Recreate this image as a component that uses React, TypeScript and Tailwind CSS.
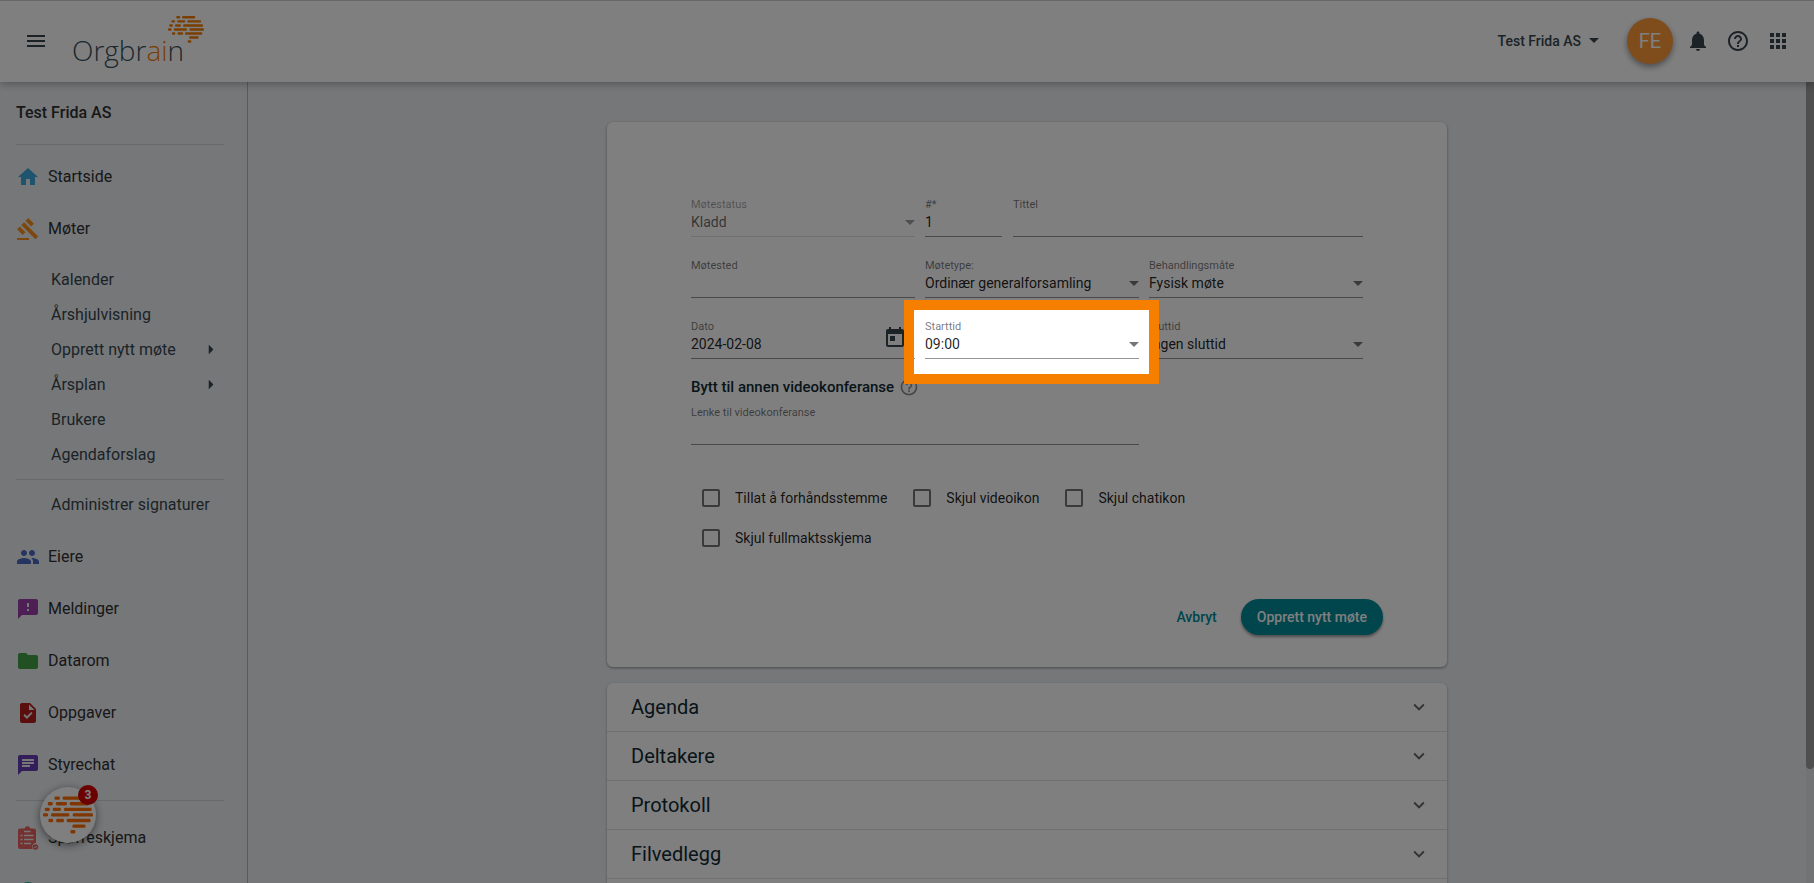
import { useState } from "react";
import type { ReactNode } from "react";
import {
  MdApps,
  MdChat,
  MdFeedback,
  MdFolder,
  MdGavel,
  MdGroup,
  MdHelpOutline,
  MdHome,
  MdKeyboardArrowDown,
  MdMenu,
  MdNotifications,
  MdTask,
  MdToday,
} from "react-icons/md";

// [x, row, width] of every dash in the brain logo
const dashes = [
  [34, 0, 16], [58, 0, 54],
  [14, 1, 15], [38, 1, 33], [79, 1, 57],
  [5, 2, 15], [29, 2, 24], [62, 2, 82],
  [0, 3, 15], [24, 3, 54], [88, 3, 60],
  [16, 4, 14], [39, 4, 23], [70, 4, 71],
  [87, 5, 39],
  [81, 6, 15],
];

const Brain = ({ className }: { className: string }) => (
  <svg viewBox="0 0 148 110" className={className} fill="currentColor" aria-hidden="true">
    {dashes.map(([x, row, width]) => (
      <rect key={`${x}-${row}`} x={x} y={row * 16.6} width={width} height={10} rx={4} />
    ))}
  </svg>
);

const Caret = ({ className }: { className: string }) => (
  <svg viewBox="0 0 10 5" className={className} fill="currentColor" aria-hidden="true">
    <path d="M0 0h10L5 5z" />
  </svg>
);

const SurveyIcon = () => (
  <svg viewBox="0 0 24 24" className="size-6" aria-hidden="true">
    <path
      fill="#e8625f"
      d="M4 2.5h4.6a3 3 0 0 1 5.8 0H18a2 2 0 0 1 2 2V17a4 4 0 0 0-3.4 6H4a2 2 0 0 1-2-2V4.500a2 2 0 0 1 2-2z"
    />
    <path
      stroke="#edeff3"
      strokeWidth="1.6"
      d="M4.500 9.500h2M8 9.500h9.500M4.500 13.500h2M8 13.500h9.500M4.500 17.500h2M8 17.500h7M8 5.500h6.500"
    />
    <circle cx="19.500" cy="21" r="2.800" fill="#e8625f" />
    <path d="m18.200 21 1 1 1.700-2" fill="none" stroke="#edeff3" strokeWidth=".8" />
  </svg>
);

const NavItem = ({ icon, label }: { icon: ReactNode; label: string }) => (
  <a href="#" className="flex h-[52px] items-center gap-2 text-[#303030]">
    {icon}
    {label}
  </a>
);

const SubItem = ({ label, more }: { label: string; more?: boolean }) => (
  <a href="#" className="flex h-[35px] items-center justify-between pr-2 pl-[35px] text-[#37474f]">
    {label}
    {more && <Caret className="h-[5px] w-[10px] -rotate-90" />}
  </a>
);

const Field = ({
  id,
  label,
  value,
  options,
  disabled,
  className = "",
  children,
}: {
  id: string;
  label: string;
  value?: string;
  options?: boolean;
  disabled?: boolean;
  className?: string;
  children?: ReactNode;
}) => (
  <div
    className={`relative flex flex-col border-b ${
      disabled ? "border-black/12 text-black/60" : "border-black/42 text-black/87"
    } ${className}`}
  >
    <label
      htmlFor={id}
      className={`text-[11px] leading-[14px] ${disabled ? "text-black/38" : "text-black/54"}`}
    >
      {label}
    </label>
    <div className="flex items-center pb-1">
      {options ? (
        <>
          <select id={id} disabled={disabled} className="h-5 w-full appearance-none text-sm opacity-100 outline-none">
            <option>{value}</option>
          </select>
          <Caret className={`h-[5px] w-[10px] shrink-0 ${disabled ? "text-black/38" : "text-black/54"}`} />
        </>
      ) : (
        <input id={id} type="text" defaultValue={value} className="h-5 w-full text-sm outline-none" />
      )}
    </div>
    {children}
  </div>
);

const Check = ({ label }: { label: string }) => (
  <label className="flex h-10 items-center gap-[15px] text-sm text-black/87">
    <input
      type="checkbox"
      className="size-[18px] appearance-none rounded-xs border-2 border-black/54 checked:bg-[#008c99]"
    />
    {label}
  </label>
);

const Header = () => (
  <header className="relative z-10 flex h-[82px] shrink-0 items-center justify-between border-t border-[#cfcfcf] bg-white px-6 pb-[2px] shadow-[0_2px_8px_rgba(0,0,0,0.3)]">
    <div className="flex items-center gap-6">
      <button aria-label="Meny" className="text-[#37474f]">
        <MdMenu className="size-6" />
      </button>
      <a href="#" className="flex items-start">
        <span className="pt-[18px] font-['Open_Sans',sans-serif] text-[28px] leading-8 font-light text-[#37505c]">
          Orgbr<span className="text-[#f57c00]">ai</span>n
        </span>
        <Brain className="-ml-4 h-[27px] w-9 text-[#f57c00]" />
      </a>
    </div>
    <div className="flex items-center gap-4 text-[#37474f]">
      <button className="mr-3 flex items-center gap-2 text-sm font-medium">
        Test Frida AS
        <Caret className="h-[5px] w-[10px]" />
      </button>
      <button className="-mr-[3px] size-[46px] rounded-full bg-[#ff9838] text-xl text-white shadow-[0_3px_6px_rgba(0,0,0,0.4)]">
        FE
      </button>
      <button aria-label="Varsler">
        <MdNotifications className="size-6" />
      </button>
      <button aria-label="Hjelp">
        <MdHelpOutline className="size-6" />
      </button>
      <button aria-label="Apper">
        <MdApps className="size-6" />
      </button>
    </div>
  </header>
);

const Sidebar = () => (
  <aside className="w-[248px] shrink-0 border-r border-[#b0b8bd] pr-[23px] pl-4 text-base">
    <p className="pt-[19px] pb-[19px] font-medium text-[#303030]">Test Frida AS</p>
    <nav>
      <hr className="mb-[6px] border-[#cfd3d6]" />
      <NavItem label="Startside" icon={<MdHome className="size-6 text-[#3fa9dc]" />} />
      <NavItem label="Møter" icon={<MdGavel className="size-6 text-[#f9901e]" />} />
      <div className="py-[7px]">
        <SubItem label="Kalender" />
        <SubItem label="Årshjulvisning" />
        <SubItem label="Opprett nytt møte" more />
        <SubItem label="Årsplan" more />
        <SubItem label="Brukere" />
        <SubItem label="Agendaforslag" />
      </div>
      <hr className="border-[#cfd3d6]" />
      <div className="pt-[7px] pb-[9px]">
        <SubItem label="Administrer signaturer" />
      </div>
      <NavItem label="Eiere" icon={<MdGroup className="size-6 text-[#4a68c0]" />} />
      <NavItem label="Meldinger" icon={<MdFeedback className="size-6 text-[#9c3fa8]" />} />
      <NavItem label="Datarom" icon={<MdFolder className="size-6 text-[#43a047]" />} />
      <NavItem label="Oppgaver" icon={<MdTask className="size-6 text-[#b71c1c]" />} />
      <NavItem label="Styrechat" icon={<MdChat className="size-6 text-[#673ab7]" />} />
      <hr className="mt-[9px] mb-[11px] border-[#cfd3d6]" />
      <NavItem label="Spørreskjema" icon={<SurveyIcon />} />
      <div className="pt-4">
        <MdHelpOutline className="size-6 text-[#26a69a]" />
      </div>
    </nav>
  </aside>
);

const sections = ["Agenda", "Deltakere", "Protokoll", "Filvedlegg", ""];

const MeetingForm = () => (
  <form className="rounded-md bg-white pt-[76px] pb-8 shadow-[0_1px_3px_rgba(0,0,0,0.4)]">
    <div className="px-[84px]">
      <div className="grid grid-cols-3 gap-y-[22px]">
        <Field id="status" label="Møtestatus" value="Kladd" options disabled />
        <div className="col-span-2 flex gap-[11px] pl-[10px]">
          <Field id="number" label="#*" value="1" className="w-[77px]" />
          <Field id="title" label="Tittel" className="flex-1" />
        </div>
        <Field id="place" label="Møtested" />
        <Field id="type" label="Møtetype:" value="Ordinær generalforsamling" options className="ml-[10px]" />
        <Field id="mode" label="Behandlingsmåte" value="Fysisk møte" options className="ml-[10px]" />
        <Field id="date" label="Dato" value="2024-02-08">
          <button type="button" aria-label="Velg dato" className="absolute right-2 bottom-2 text-[#37474f]">
            <MdToday className="size-6" />
          </button>
        </Field>
        <Field id="start" label="Starttid" value="09:00" options className="ml-[10px]">
          {/* tour highlight, its shadow dims the rest of the page */}
          <div className="pointer-events-none absolute -top-5 -right-5 -bottom-[26px] -left-[21px] z-50 border-[10px] border-[#f77f00] shadow-[0_0_0_3000px_rgba(0,0,0,0.5)]" />
        </Field>
        <Field id="end" label="Sluttid" value="Ingen sluttid" options className="ml-[10px]" />
      </div>
      <div className="flex items-center gap-[5px] pt-[18px] pb-[9px]">
        <h2 className="text-[15px] leading-5 font-medium text-[#102a35]">Bytt til annen videokonferanse</h2>
        <MdHelpOutline className="size-5 text-[#8a8f92]" />
      </div>
      <Field id="link" label="Lenke til videokonferanse" className="w-2/3" />
    </div>
    <div className="mt-[33px] flex flex-wrap gap-x-[26px] px-[95px]">
      <Check label="Tillat å forhåndsstemme" />
      <Check label="Skjul videoikon" />
      <Check label="Skjul chatikon" />
      <Check label="Skjul fullmaktsskjema" />
    </div>
    <div className="mt-[41px] flex justify-end gap-2 pr-16 text-sm font-medium">
      <button type="button" className="h-9 rounded-full px-4 text-[#008c99]">
        Avbryt
      </button>
      <button
        type="submit"
        className="h-9 rounded-full bg-[#008c99] px-4 text-white shadow-[0_2px_3px_rgba(0,0,0,0.4)]"
      >
        Opprett nytt møte
      </button>
    </div>
  </form>
);

export default function App() {
  const [open, setOpen] = useState("");

  return (
    <div className="relative flex h-screen flex-col overflow-hidden bg-[#edeff3] font-[Roboto,sans-serif]">
      <Header />
      <div className="flex min-h-0 flex-1">
        <Sidebar />
        <main className="min-w-0 flex-1 pt-10">
          <div className="mx-auto max-w-[840px]">
            <MeetingForm />
            <div className="mt-4 rounded-t-md bg-white shadow-[0_1px_3px_rgba(0,0,0,0.3)]">
              {sections.map((section) => (
                <button
                  key={section}
                  onClick={() => setOpen(open === section ? "" : section)}
                  className="flex h-[49px] w-full items-center justify-between border-b border-black/12 px-6 pr-[17px] text-xl text-[#102a35]"
                >
                  {section}
                  {section && <MdKeyboardArrowDown className="size-[22px] text-black/60" />}
                </button>
              ))}
            </div>
          </div>
        </main>
        <div className="w-2 shrink-0 bg-[#e4e6e9]">
          <div className="h-6/7 rounded-b-full bg-[#9e9e9e]" />
        </div>
      </div>
      <button
        aria-label="Orgbrain"
        className="absolute bottom-10 left-10 z-20 flex size-14 items-center justify-center rounded-full bg-white text-[#ff6d00] shadow-[0_2px_8px_rgba(0,0,0,0.5)]"
      >
        <Brain className="h-[38px] w-[50px]" />
        <span className="absolute -top-[2px] -right-[2px] flex size-5 items-center justify-center rounded-full bg-[#d60000] text-xs font-bold text-white">
          3
        </span>
      </button>
    </div>
  );
}
